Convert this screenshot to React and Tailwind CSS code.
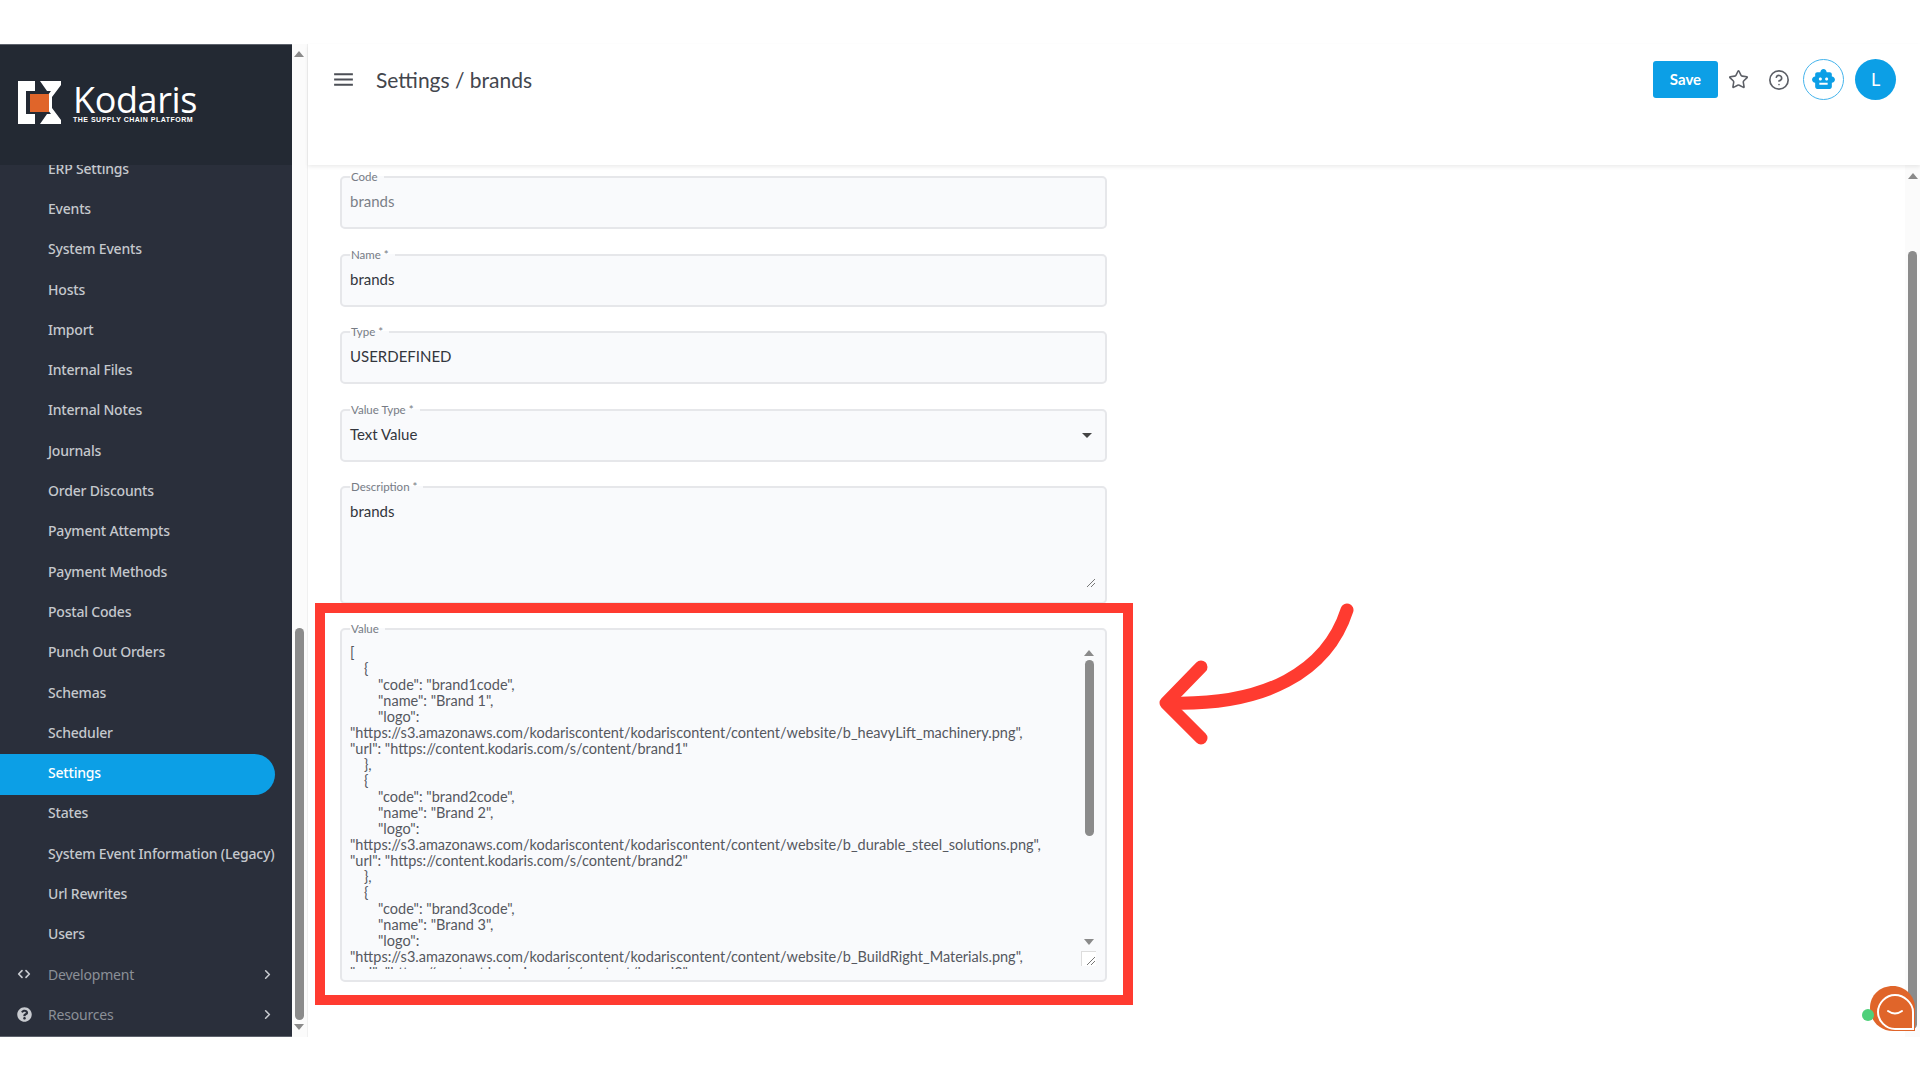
import { Star, CircleHelp, ChevronRight, ChevronsLeftRight } from "lucide-react"
import { MdSmartToy, MdMenu, MdArrowDropDown } from "react-icons/md"
import { FaQuestionCircle } from "react-icons/fa"

const menuItems = [
  "ERP Settings", "Events", "System Events", "Hosts", "Import", "Internal Files", "Internal Notes",
  "Journals", "Order Discounts", "Payment Attempts", "Payment Methods", "Postal Codes",
  "Punch Out Orders", "Schemas", "Scheduler", "Settings", "States",
  "System Event Information (Legacy)", "Url Rewrites", "Users",
]

const valueLines = [
  [0, "["],
  [1, "{"],
  [2, '"code": "brand1code",'],
  [2, '"name": "Brand 1",'],
  [2, '"logo":'],
  [0, '"https://s3.amazonaws.com/kodariscontent/kodariscontent/content/website/b_heavyLift_machinery.png",'],
  [0, '"url": "https://content.kodaris.com/s/content/brand1"'],
  [1, "},"],
  [1, "{"],
  [2, '"code": "brand2code",'],
  [2, '"name": "Brand 2",'],
  [2, '"logo":'],
  [0, '"https://s3.amazonaws.com/kodariscontent/kodariscontent/content/website/b_durable_steel_solutions.png",'],
  [0, '"url": "https://content.kodaris.com/s/content/brand2"'],
  [1, "},"],
  [1, "{"],
  [2, '"code": "brand3code",'],
  [2, '"name": "Brand 3",'],
  [2, '"logo":'],
  [0, '"https://s3.amazonaws.com/kodariscontent/kodariscontent/content/website/b_BuildRight_Materials.png",'],
  [0, '"url": "https://content.kodaris.com/s/content/brand3"'],
]

const indents = ["pl-0", "pl-[14px]", "pl-[28px]"]

function Field({ label, className, children }) {
  return (
    <fieldset className={`border-2 border-[#e6e7ea] rounded-[5px] bg-[#f9fafc] px-[8px] w-[767px] shrink-0 ${className}`}>
      <legend className="pl-[1px] pr-[6px] text-[11.5px] leading-[10px] text-[#777c85]">{label}</legend>
      {children}
    </fieldset>
  )
}

function ResizeGrip() {
  return (
    <svg width="10" height="10" viewBox="0 0 10 10" className="text-[#777]">
      <path d="M1 9L9 1M5 9L9 5" stroke="currentColor" />
    </svg>
  )
}

function ScrollUp({ className }) {
  return <div className={`w-0 h-0 border-x-[5px] border-x-transparent border-b-[6px] border-b-[#8a8a8a] ${className}`} />
}

function ScrollDown({ className }) {
  return <div className={`w-0 h-0 border-x-[5px] border-x-transparent border-t-[6px] border-t-[#8a8a8a] ${className}`} />
}

function Sidebar() {
  return (
    <div className="w-[292px] h-full bg-[#2a2f3b] flex flex-col overflow-hidden shrink-0 border-y border-[#5d626c] font-['Noto_Sans',sans-serif]">
      <div className="h-[120px] bg-[#232933] shrink-0 flex items-center pl-[18px] pb-[5px] gap-[12px] relative z-10">
        <svg width="43" height="43" viewBox="0 0 43 43">
          <path d="M0 0H17V10H8V33H17V43H0Z" fill="#fff" />
          <path d="M22 0H43V4L34 16V27L43 39V43H22L29 33H33L26 24V19L33 10H29Z" fill="#fff" />
          <rect x="12" y="13" width="19" height="18" fill="#e0652a" />
        </svg>
        <div className="flex flex-col text-white leading-none">
          <span className="text-[36px] leading-[33px] tracking-[-0.4px] font-['Open_Sans',sans-serif]">Kodaris</span>
          <span className="text-[7px] leading-[7px] font-bold tracking-[0.5px] font-['Liberation_Sans',sans-serif]">THE SUPPLY CHAIN PLATFORM</span>
        </div>
      </div>
      <div className="-mt-[17px] flex flex-col">
        {menuItems.map((item) => (
          <div
            key={item}
            className={`h-[40.3px] shrink-0 flex items-center pl-[48px] text-[14px] font-medium tracking-[-0.2px] ${
              item === "Settings" ? "bg-[#0c9fe6] text-white rounded-r-full w-[275px] translate-y-[2px] pb-[4px]" : "text-[#c5c8cd]"
            }`}
          >
            {item}
          </div>
        ))}
        <div className="h-[40.3px] shrink-0 flex items-center pl-[16px] pr-[17px] text-[14px] tracking-[-0.2px] text-[#8b8f97]">
          <ChevronsLeftRight size={16} strokeWidth={2.5} className="text-[#c8cbd0]" />
          <span className="ml-[16px] flex-1">Development</span>
          <ChevronRight size={15} strokeWidth={2.5} className="text-[#c8cbd0]" />
        </div>
        <div className="h-[40.3px] shrink-0 flex items-center pl-[17px] pr-[17px] text-[14px] tracking-[-0.2px] text-[#8b8f97]">
          <FaQuestionCircle size={15} className="text-[#c8cbd0]" />
          <span className="ml-[16px] flex-1">Resources</span>
          <ChevronRight size={15} strokeWidth={2.5} className="text-[#c8cbd0]" />
        </div>
      </div>
    </div>
  )
}

export default function App() {
  return (
    <div className="relative w-[1920px] h-[1080px] bg-white overflow-hidden pt-[44px] font-['Lato',sans-serif]">
      <div className="flex h-[993px]">
        <Sidebar />

        <div className="w-[16px] h-full bg-[#fbfbfb] border-r border-[#f0f0f0] flex flex-col items-center pt-[7px] pb-[7px] pr-[1px] shrink-0">
          <ScrollUp />
          <div className="h-[571px] shrink-0" />
          <div className="w-[9px] flex-1 bg-[#8b8b8b] rounded-full" />
          <ScrollDown className="mt-[4px]" />
        </div>

        <div className="flex-1 flex flex-col min-w-0">
          <header className="h-[121px] shrink-0 shadow-[0_2px_4px_rgba(0,0,0,0.08)] pb-[50px] flex items-center pl-[23px] pr-[24px] relative">
            <MdMenu size={25} className="text-[#4c4f56]" />
            <h1 className="ml-[20px] text-[21px] text-[#43464d] flex-1">Settings / brands</h1>
            <button className="w-[65px] h-[37px] bg-[#0c9fe6] rounded-[3px] text-white text-[15px] font-bold">Save</button>
            <Star size={21} strokeWidth={1.8} className="ml-[10px] text-[#5c5f66]" />
            <CircleHelp size={22} strokeWidth={1.8} className="ml-[19px] text-[#5c5f66]" />
            <div className="ml-[13px] w-[41px] h-[41px] rounded-full border border-[#45b4ec] flex items-center justify-center">
              <MdSmartToy size={25} className="text-[#0c9fe6]" />
            </div>
            <div className="ml-[11px] w-[41px] h-[41px] rounded-full bg-[#0c9fe6] flex items-center justify-center text-white text-[18px]">L</div>
          </header>

          <div className="flex-1 flex min-h-0">
            <main className="flex-1 flex flex-col gap-[20.5px] pl-[32px] pt-[7px] overflow-hidden">
              <Field label="Code" className="h-[57px]">
                <div className="text-[15px] leading-[20px] pt-[9px] text-[#7b8088]">brands</div>
              </Field>
              <Field label="Name *" className="h-[57px]">
                <div className="text-[15px] leading-[20px] pt-[9px] text-[#33363d]">brands</div>
              </Field>
              <Field label="Type *" className="h-[57px]">
                <div className="text-[15px] leading-[20px] pt-[9px] text-[#33363d]">USERDEFINED</div>
              </Field>
              <Field label="Value Type *" className="h-[57px]">
                <div className="flex items-center justify-between h-[20px] mt-[9px] text-[15px] leading-[20px] text-[#33363d]">
                  Text Value
                  <MdArrowDropDown size={24} className="text-[#444] mt-[2px] -mr-[2px]" />
                </div>
              </Field>
              <Field label="Description *" className="h-[121.5px]">
                <div className="relative h-[93px] text-[15px] leading-[20px] pt-[9px] text-[#33363d]">
                  brands
                  <div className="absolute right-[1px] -bottom-[3px] flex"><ResizeGrip /></div>
                </div>
              </Field>
              <Field label="Value" className="h-[358px]">
                <div className="relative flex h-[340px] pt-[11px]">
                  <div className="flex-1 h-[324px] overflow-hidden text-[14.5px] leading-[16px] text-[#55585f]">
                    {valueLines.map(([indent, text], i) => (
                      <div key={i} className={`whitespace-nowrap ${indents[indent]}`}>{text}</div>
                    ))}
                  </div>
                  <div className="w-[16px] flex flex-col items-center pt-[5px] shrink-0">
                    <ScrollUp />
                    <div className="w-[9px] h-[176px] bg-[#8b8b8b] rounded-full mt-[4px]" />
                    <ScrollDown className="mt-[103px]" />
                  </div>
                  <div className="absolute right-[1px] bottom-[8px] w-[15px] h-[15px] bg-white border-l border-t border-[#ddd] flex items-end justify-end">
                    <ResizeGrip />
                  </div>
                </div>
              </Field>
            </main>
            <div className="w-[15px] shrink-0 bg-[#fbfbfb] flex flex-col items-center pt-[8px] pb-[8px]">
              <ScrollUp />
              <div className="h-[72px] shrink-0" />
              <div className="w-[9px] flex-1 bg-[#8b8b8b] rounded-full" />
            </div>
          </div>
        </div>
      </div>

      {/* red highlight box and arrow */}
      <div className="absolute left-[315px] top-[603px] w-[818px] h-[402px] border-[10px] border-[#ff3b30]" />
      <svg className="absolute left-[1155px] top-[600px]" width="205" height="150" viewBox="0 0 205 150" fill="none">
        <path d="M192 10C172 72 110 106 14 103" stroke="#ff3b30" strokeWidth="13" strokeLinecap="round" />
        <path d="M46 67L11 103L46 138" stroke="#ff3b30" strokeWidth="13" strokeLinecap="round" strokeLinejoin="round" />
      </svg>

      {/* chat widget */}
      <div className="absolute left-[1862px] top-[985px] w-[54px] h-[46px]">
        <svg width="54" height="46" viewBox="0 0 54 46">
          <path d="M31 1C43 1 53 11 53 23V46H31C18 46 8 36 8 23S18 1 31 1Z" fill="#e0652a" />
          <path d="M33 10C42 10 51 18 51 27V44H33C24 44 16 36 16 27S24 10 33 10Z" fill="#e0652a" stroke="#fff" strokeWidth="2" />
          <path d="M26 26Q33 31 40 26" fill="none" stroke="#fff" strokeWidth="2" strokeLinecap="round" />
        </svg>
        <div className="absolute left-0 top-[24px] w-[12px] h-[12px] rounded-full bg-[#4fd07a]" />
      </div>
    </div>
  )
}
